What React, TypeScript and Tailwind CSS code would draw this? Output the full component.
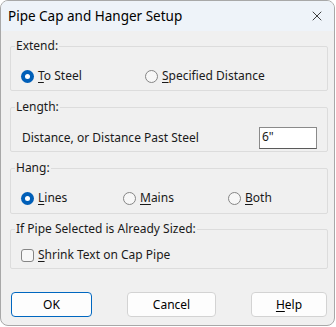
import { X } from "lucide-react";

const font = { fontFamily: '"Noto Sans", "Open Sans", Arial, sans-serif' };

function Radio({ checked, label, ul, className = "" }: { checked?: boolean; label: string; ul: number; className?: string }) {
  return (
    <label className={`flex items-center gap-[4px] ${className}`}>
      {checked ? (
        <span className="w-[13px] h-[13px] rounded-full bg-[#005fb8] flex items-center justify-center">
          <span className="w-[5px] h-[5px] rounded-full bg-white" />
        </span>
      ) : (
        <span className="w-[13px] h-[13px] rounded-full border border-[#858585] bg-[#f7f7f7]" />
      )}
      <span>
        {label.slice(0, ul)}
        <span className="underline underline-offset-2">{label[ul]}</span>
        {label.slice(ul + 1)}
      </span>
    </label>
  );
}

function Group({ title, children, className = "" }: { title: string; children: React.ReactNode; className?: string }) {
  return (
    <fieldset className={`border border-[#dcdcdc] rounded-[2px] ml-[9px] mr-[6px] ${className}`}>
      <legend className="ml-[4px] px-[1px] leading-[14px]">{title}</legend>
      {children}
    </fieldset>
  );
}

export default function App() {
  return (
    <div className="w-[336px] h-[327px] bg-white" style={font}>
      <div className="w-[335px] h-[326px] rounded-[8px] border border-[#a8a8a8] bg-[#f0f0f0] overflow-hidden text-[12px] text-[#1a1a1a] flex flex-col">
        <div className="h-[30px] bg-[#eef3f9] flex items-center justify-between pl-[7px] pr-[9px] shrink-0">
          <span className="text-[13.5px] text-black">Pipe Cap and Hanger Setup</span>
          <X size={16} strokeWidth={1.3} className="text-[#222]" />
        </div>

        <Group title="Extend:" className="mt-[8px]">
          <div className="flex items-center h-[16px] mt-[15px] mb-[6px] pl-[10px]">
            <Radio checked label="To Steel" ul={0} className="w-[124px]" />
            <Radio label="Specified Distance" ul={0} />
          </div>
        </Group>

        <Group title="Length:" className="mt-[9px]">
          <div className="flex items-center justify-between h-[22px] mt-[13px] mb-[2px] pl-[11px] pr-[10px]">
            <span>Distance, or Distance Past Steel</span>
            <div className="w-[58px] h-[22px] bg-white border border-[#8a8a8a] border-b-[#5a5a5a] px-[2px] leading-[18px]">6"</div>
          </div>
        </Group>

        <Group title="Hang:" className="mt-[9px]">
          <div className="flex items-center h-[16px] mt-[15px] mb-[7px] pl-[10px]">
            <Radio checked label="Lines" ul={0} className="w-[102px]" />
            <Radio label="Mains" ul={0} className="w-[105px]" />
            <Radio label="Both" ul={0} />
          </div>
        </Group>

        <Group title="If Pipe Selected is Already Sized:" className="mt-[8px]">
          <div className="flex items-center gap-[4px] h-[16px] mt-[11px] mb-[5px] pl-[10px]">
            <span className="w-[13px] h-[13px] rounded-[3px] border border-[#858585] bg-[#f7f7f7]" />
            <span>
              <span className="underline underline-offset-2">S</span>hrink Text on Cap Pipe
            </span>
          </div>
        </Group>

        <div className="flex items-center mt-[23px] pl-[10px] text-black">
          <button className="w-[81px] h-[25px] rounded-[4px] bg-[#fdfdfd] border border-[#0067c0]">OK</button>
          <button className="w-[89px] h-[25px] ml-[35px] rounded-[4px] bg-[#fdfdfd] border border-[#d3d3d3]">Cancel</button>
          <button className="w-[76px] h-[25px] ml-[35px] rounded-[4px] bg-[#fdfdfd] border border-[#d3d3d3]">
            <span className="underline underline-offset-2">H</span>elp
          </button>
        </div>
      </div>
    </div>
  );
}
